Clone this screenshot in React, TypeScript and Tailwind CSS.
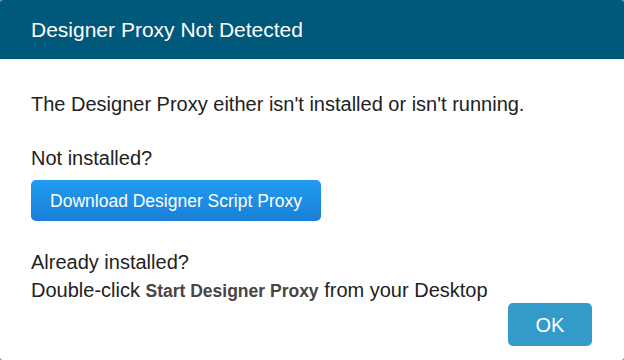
export default function App() {
  return (
    <div className="w-[624px] h-[360px] bg-[#8a8a8a]" style={{ fontFamily: '"Liberation Sans", Arial, sans-serif' }}>
      <div className="w-full h-full bg-white rounded-[3px] overflow-hidden flex flex-col">
        <div className="h-[59px] bg-[#00587a] flex items-center px-[31px] shrink-0">
          <h1 className="text-white text-[21px] leading-none">Designer Proxy Not Detected</h1>
        </div>
        <div className="flex flex-col px-[31px] pt-[31px] text-[20px] leading-[28px] text-[#222]">
          <p>The Designer Proxy either isn't installed or isn't running.</p>
          <p className="mt-[26px]">Not installed?</p>
          <button className="mt-[8px] w-[290px] h-[41px] rounded-[5px] bg-gradient-to-b from-[#1f9cf2] to-[#1a7fd6] text-white text-[17.5px]">
            Download Designer Script Proxy
          </button>
          <p className="mt-[27px]">Already installed?</p>
          <p>
            Double-click <span className="font-bold text-[17.5px] text-[#4a4444]">Start Designer Proxy</span> from your Desktop
          </p>
          <div className="flex justify-end pr-[1px] -mt-[2px]">
            <button className="w-[84px] h-[43px] rounded-[5px] bg-[#339bc9] text-white text-[20px]">OK</button>
          </div>
        </div>
      </div>
    </div>
  );
}
